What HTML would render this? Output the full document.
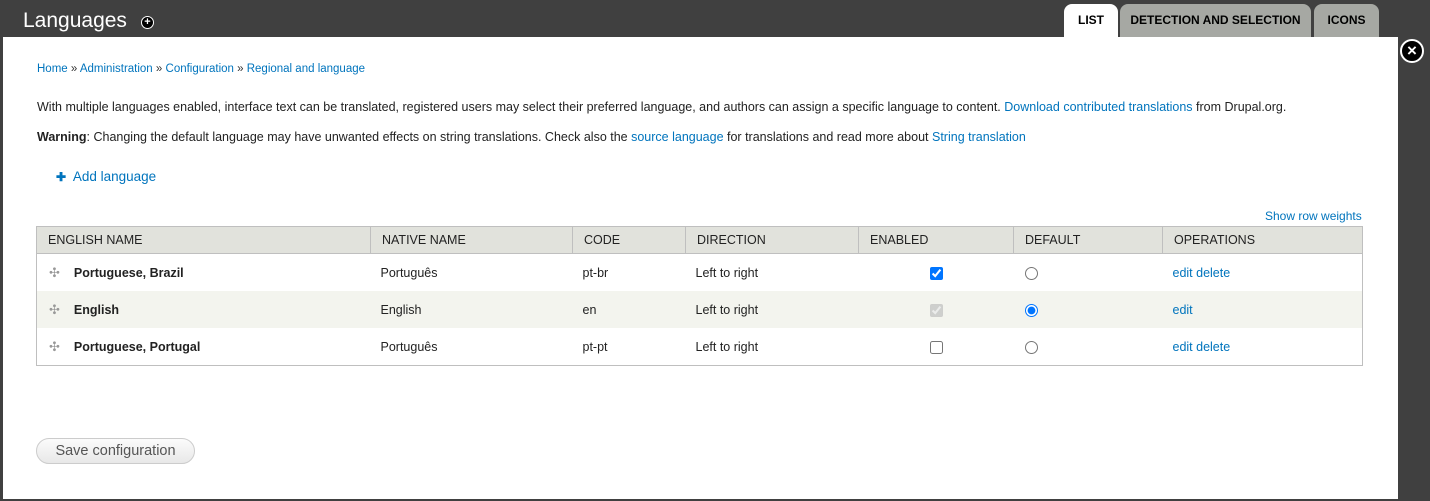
<!DOCTYPE html>
<html><head><style>
body{margin:0;width:1430px;height:501px;background:#404040;position:relative;overflow:hidden;font-family:"Liberation Sans",sans-serif;font-size:12.5px;color:#222}
a{color:#0074bd;text-decoration:none}
.title{position:absolute;left:23px;top:9px;color:#fff;font-size:21px}
.plus{position:absolute;left:141px;top:16px;width:11px;height:11px;border-radius:50%;background:#000;border:1px solid #fff;color:#fff;font-size:11px;line-height:11px;text-align:center;font-weight:bold}
.tab{position:absolute;top:4px;height:33px;border-radius:8px 8px 0 0;background:#a6a8a3;font-weight:bold;font-size:12px;line-height:32px;text-align:center;color:#000}
.modal{position:absolute;left:3px;top:37px;width:1395px;height:462px;background:#fff}
.close{position:absolute;left:1400px;top:39px;width:20px;height:20px;border-radius:50%;background:#000;border:2px solid #fff;color:#fff;font-size:17px;line-height:20px;text-align:center;font-weight:bold}
.t{position:absolute;white-space:nowrap}
table{position:absolute;left:36px;top:226px;width:1327px;border-collapse:collapse;border:1px solid #bfbfbf;table-layout:fixed}
th{background:#e1e2dc;font-weight:normal;text-align:left;height:26px;padding:0 11px;border-right:1px solid #bfbfbf;border-bottom:1px solid #bfbfbf}
td{height:37px;padding:0 10px}
tr.alt td{background:#f3f4ee}
.drag{display:inline-block;color:#999;margin-left:2px;margin-right:14px;font-size:13px}
.btn{position:absolute;left:36px;top:438px;width:157px;height:24px;border:1px solid #ccc;border-radius:13px;background:linear-gradient(#fbfbfb,#e8e8e8);color:#555;font-size:14.5px;line-height:24px;text-align:center}
input{margin:0;vertical-align:middle}
</style></head><body>
<div class="title">Languages</div><div class="plus">+</div>
<div class="tab" style="left:1064px;width:54px;background:#fff">LIST</div>
<div class="tab" style="left:1120px;width:191px">DETECTION AND SELECTION</div>
<div class="tab" style="left:1314px;width:65px">ICONS</div>
<div class="modal"></div>
<div class="close">×</div>
<div class="t" style="left:37px;top:63px;font-size:11.5px;color:#333"><a>Home</a> » <a>Administration</a> » <a>Configuration</a> » <a>Regional and language</a></div>
<div class="t" style="left:37px;top:100px">With multiple languages enabled, interface text can be translated, registered users may select their preferred language, and authors can assign a specific language to content. <a>Download contributed translations</a> from Drupal.org.</div>
<div class="t" style="left:37px;top:130px"><b>Warning</b>: Changing the default language may have unwanted effects on string translations. Check also the <a>source language</a> for translations and read more about <a>String translation</a></div>
<div class="t" style="left:56px;top:169px;font-size:13.5px"><a><b style="font-size:12px">✚</b>&nbsp; Add language</a></div>
<div class="t" style="left:1265px;top:209px;font-size:12px"><a>Show row weights</a></div>
<table>
<colgroup><col style="width:334px"><col style="width:202px"><col style="width:113px"><col style="width:173px"><col style="width:155px"><col style="width:149px"><col></colgroup>
<tr><th>ENGLISH NAME</th><th>NATIVE NAME</th><th>CODE</th><th>DIRECTION</th><th>ENABLED</th><th>DEFAULT</th><th style="border-right:0">OPERATIONS</th></tr>
<tr><td><span class="drag">✣</span><b>Portuguese, Brazil</b></td><td>Português</td><td>pt-br</td><td>Left to right</td><td style="text-align:center"><input type="checkbox" checked></td><td style="padding-left:11px"><input type="radio"></td><td><a>edit delete</a></td></tr>
<tr class="alt"><td><span class="drag">✣</span><b>English</b></td><td>English</td><td>en</td><td>Left to right</td><td style="text-align:center"><input type="checkbox" checked disabled></td><td style="padding-left:11px"><input type="radio" checked></td><td><a>edit</a></td></tr>
<tr><td><span class="drag">✣</span><b>Portuguese, Portugal</b></td><td>Português</td><td>pt-pt</td><td>Left to right</td><td style="text-align:center"><input type="checkbox"></td><td style="padding-left:11px"><input type="radio"></td><td><a>edit delete</a></td></tr>
</table>
<div class="btn">Save configuration</div>
</body></html>
